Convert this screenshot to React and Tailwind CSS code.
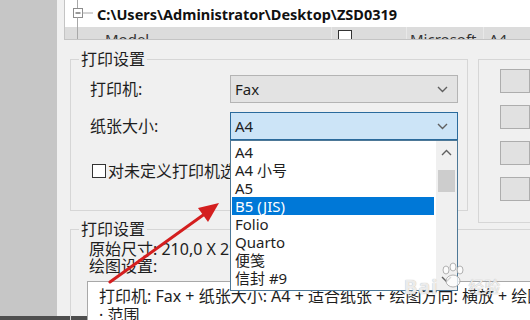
import React from "react";

const FONT = "font-['Noto_Sans','Noto_Sans_CJK_SC',sans-serif]";

function Chevron({ up = false, color = "#606060" }) {
  return (
    <svg width="11" height="7" viewBox="0 0 11 7">
      <path
        d={up ? "M1 6 L5.5 1.5 L10 6" : "M1 1 L5.5 5.5 L10 1"}
        stroke={color}
        strokeWidth="1.4"
        fill="none"
      />
    </svg>
  );
}

function Select({ value, active = false }) {
  return (
    <div
      className={
        active
          ? "w-[228px] h-[28px] flex items-center justify-between pl-[4px] pr-[9px] border border-[#2a6a9c] bg-[#cce4f7]"
          : "w-[228px] h-[28px] flex items-center justify-between pl-[4px] pr-[9px] border border-[#b4b4b4] bg-[#e3e3e3]"
      }
    >
      <span className="text-[15px] leading-[18px]">{value}</span>
      <Chevron />
    </div>
  );
}

const items = ["A4", "A4 小号", "A5", "B5 (JIS)", "Folio", "Quarto", "便笺", "信封 #9"];

export default function App() {
  return (
    <div
      className={`relative w-[530px] h-[320px] overflow-hidden flex flex-col bg-[#f0f0f0] text-[#1e1e1e] ${FONT}`}
    >
      <div className="flex flex-1 min-h-0">
        <div className="w-[57px] shrink-0 bg-[#c6c6c6]" />
        <div className="flex-1 min-w-0 flex flex-col">
          {/* tree panel */}
          <div className="ml-[7px] h-[40px] shrink-0 border-l border-b border-[#c4c4c4] bg-white flex flex-col">
            <div className="h-[27px] flex items-center">
              <svg width="32" height="27" viewBox="0 0 32 27" className="shrink-0">
                <line x1="12.5" y1="0" x2="12.5" y2="8" stroke="#a8a8a8" />
                <rect x="8.5" y="8.5" width="9" height="9" fill="#fff" stroke="#8c8c8c" />
                <line x1="10.5" y1="13" x2="15.5" y2="13" stroke="#333" />
                <line x1="17.5" y1="13" x2="28" y2="13" stroke="#a8a8a8" />
                <line x1="12.5" y1="17.5" x2="12.5" y2="27" stroke="#a8a8a8" />
              </svg>
              <span className="text-[14.5px] font-bold leading-[20px] whitespace-nowrap text-[#111]">
                C:\Users\Administrator\Desktop\ZSD0319
              </span>
            </div>
            <div className="h-[12px] flex bg-[#dcdcdc] overflow-hidden text-[15px] leading-[18px] text-[#333]">
              <div className="w-[266px] shrink-0 flex">
                <svg width="31" height="12" viewBox="0 0 31 12" className="shrink-0">
                  <line x1="12.5" y1="0" x2="12.5" y2="12" stroke="#a8a8a8" />
                </svg>
                <span className="ml-[9px] pt-[3px]">Model</span>
              </div>
              <div className="w-[75px] shrink-0 border-l border-[#e8e8e8] pl-[6px] pt-[3px]">
                <div className="w-[14px] h-[14px] border border-[#333] bg-white" />
              </div>
              <div className="w-[77px] shrink-0 border-l border-[#e8e8e8] pl-[3px] pt-[3px] whitespace-nowrap">
                Microsoft
              </div>
              <div className="flex-1 border-l border-[#e8e8e8] pl-[5px] pt-[3px]">A4</div>
            </div>
          </div>

          {/* upper row */}
          <div className="flex items-start mt-[19px] shrink-0">
            <div className="relative ml-[13px] w-[398px] h-[152px] border border-[#d6d6d6] shrink-0">
              <span className="absolute -top-[10px] left-[8px] px-[2px] bg-[#f0f0f0] text-[16px] leading-[18px]">
                打印设置
              </span>
              <div className="flex items-center mt-[15px] pl-[19px]">
                <span className="w-[140px] text-[16px] leading-[18px]">打印机:</span>
                <Select value="Fax" />
              </div>
              <div className="flex items-center mt-[9px] pl-[19px]">
                <span className="w-[140px] text-[16px] leading-[18px]">纸张大小:</span>
                <Select value="A4" active />
              </div>
              <div className="flex items-center mt-[21px] pl-[21px] h-[20px]">
                <div className="w-[14px] h-[14px] border border-[#333] bg-white shrink-0" />
                <span className="ml-[2px] text-[16px] leading-[18px] whitespace-nowrap">
                  对未定义打印机选择默认设置
                </span>
              </div>
            </div>
            <div className="ml-[10px] flex-1 h-[164px] border-l border-t border-b border-[#d6d6d6] pl-[21px] pt-[9px] flex flex-col gap-[12px]">
              <div className="h-[24px] border border-[#adadad] bg-[#e1e1e1]" />
              <div className="h-[24px] border border-[#adadad] bg-[#e1e1e1]" />
              <div className="h-[24px] border border-[#adadad] bg-[#e1e1e1]" />
              <div className="h-[24px] border border-[#adadad] bg-[#e1e1e1]" />
            </div>
          </div>

          {/* lower group */}
          <div className="relative ml-[13px] mt-[6px] flex-1 border-l border-t border-[#d6d6d6] pl-[18px] pt-[11px] flex flex-col">
            <span className="absolute -top-[10px] left-[8px] px-[2px] bg-[#f0f0f0] text-[16px] leading-[18px]">
              打印设置
            </span>
            <div className="text-[16px] leading-[17px] whitespace-nowrap">原始尺寸: 210,0 X 297,0 毫米</div>
            <div className="text-[16px] leading-[17px] whitespace-nowrap">绘图设置:</div>
            <div className="mt-[6px] -ml-[2px] flex-1 border-l border-t border-[#a8a8a8] bg-white pl-[11px] pt-[5px] text-[16px] leading-[19px] whitespace-nowrap">
              <div>打印机: Fax + 纸张大小: A4 + 适合纸张 + 绘图方向: 横放 + 绘图</div>
              <div>· 范围</div>
            </div>
          </div>
        </div>
      </div>
      <div className="h-[4px] shrink-0 bg-[#4e4e4e]" />

      {/* dropdown list */}
      <div className="absolute left-[230px] top-[140px] w-[228px] h-[151px] border border-[#4d7897] bg-white flex">
        <div className="flex-1 pt-[2px] pl-[1px] pr-[2px]">
          {items.map((it) => (
            <div
              key={it}
              className={
                it === "B5 (JIS)"
                  ? "h-[18px] pl-[3px] bg-[#0078d7] text-white text-[15px] leading-[18px] whitespace-nowrap"
                  : "h-[18px] pl-[3px] text-[15px] leading-[18px] whitespace-nowrap"
              }
            >
              {it}
            </div>
          ))}
        </div>
        <div className="w-[21px] bg-[#f0f0f0] flex flex-col items-center">
          <div className="h-[22px] flex items-center justify-center">
            <Chevron up />
          </div>
          <div className="mt-[7px] w-[17px] h-[22px] bg-[#cdcdcd]" />
          <div className="flex-1" />
          <div className="h-[22px] flex items-center justify-center">
            <Chevron />
          </div>
        </div>
      </div>

      {/* watermark */}
      <div className="absolute left-[404px] top-[262px] flex items-end gap-[2px] text-white/80 [text-shadow:0_0_1px_#9a9a9a] pointer-events-none">
        <span className="text-[20px] leading-[22px] font-bold tracking-[1px]">Bai</span>
        <svg width="26" height="30" viewBox="0 0 26 30" className="mb-[6px]">
          <g fill="#ffffff" fillOpacity="0.75" stroke="#a0a0a0" strokeWidth="0.8">
            <ellipse cx="6" cy="8" rx="3" ry="4" />
            <ellipse cx="13" cy="5" rx="3" ry="4" />
            <ellipse cx="20" cy="8" rx="3" ry="4" />
            <ellipse cx="13" cy="19" rx="7" ry="6" />
          </g>
        </svg>
        <span className="text-[16px] leading-[22px]">经验</span>
      </div>

      {/* red arrow */}
      <svg
        className="absolute left-0 top-0 pointer-events-none"
        width="530"
        height="320"
        viewBox="0 0 530 320"
      >
        <line x1="110" y1="282" x2="206" y2="213" stroke="#d41f1f" strokeWidth="3" strokeLinecap="round" />
        <polygon points="219,203 198,208 208,222" fill="#d41f1f" />
      </svg>
    </div>
  );
}
